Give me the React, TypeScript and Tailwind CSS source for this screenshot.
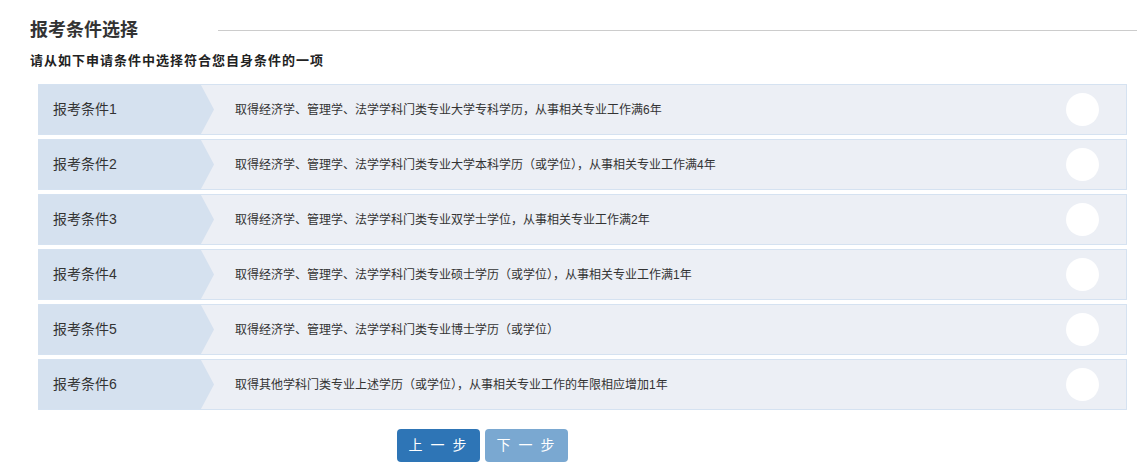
import React, { useState } from 'react';

const conditions = [
  '取得经济学、管理学、法学学科门类专业大学专科学历，从事相关专业工作满6年',
  '取得经济学、管理学、法学学科门类专业大学本科学历（或学位），从事相关专业工作满4年',
  '取得经济学、管理学、法学学科门类专业双学士学位，从事相关专业工作满2年',
  '取得经济学、管理学、法学学科门类专业硕士学历（或学位），从事相关专业工作满1年',
  '取得经济学、管理学、法学学科门类专业博士学历（或学位）',
  '取得其他学科门类专业上述学历（或学位），从事相关专业工作的年限相应增加1年',
];

const font = { fontFamily: '"Liberation Sans", "Noto Sans CJK SC", sans-serif' };

export default function App() {
  const [selected, setSelected] = useState<number | null>(null);

  return (
    <div className="w-[1137px] h-[473px] bg-white text-[#333]" style={font}>
      {/* 标题 */}
      <div className="flex items-center pl-[30px] pt-[19px]">
        <h2 className="w-[188px] shrink-0 text-[18px] leading-[22px] font-bold text-[#333]">报考条件选择</h2>
        <div className="flex-1 h-px bg-[#cccccc]" />
      </div>
      <p className="pl-[30px] mt-[11px] text-[13px] leading-[18px] font-bold tracking-[1px] text-[#222]">
        请从如下申请条件中选择符合您自身条件的一项
      </p>

      {/* 条件列表 */}
      <div className="mt-[14px] ml-[38px] w-[1089px] flex flex-col gap-[4px]">
        {conditions.map((text, i) => (
          <div
            key={i}
            onClick={() => setSelected(i)}
            className="relative flex items-center h-[51px] bg-[#eceff5] border border-[#d5e2f1] cursor-pointer"
          >
            <div className="relative h-full w-[163px] shrink-0 bg-[#d5e1ef] flex items-center pl-[15px] -ml-px -my-px">
              <span className="text-[14px] text-[#333]">报考条件{i + 1}</span>
              <svg className="absolute left-full top-0 h-full w-[13px]" viewBox="0 0 13 51" preserveAspectRatio="none">
                <polygon points="0,0 13,25.5 0,51" fill="#d5e1ef" />
              </svg>
            </div>
            <div className="flex-1 pl-[34px] text-[12px] text-[#333]">{text}</div>
            <div className="w-[33px] h-[33px] rounded-full bg-white mr-[27px] flex items-center justify-center">
              {selected === i && <div className="w-[15px] h-[15px] rounded-full bg-[#2e75b6]" />}
            </div>
          </div>
        ))}
      </div>

      {/* 按钮 */}
      <div className="flex gap-[5px] ml-[397px] mt-[19px]">
        <button className="w-[83px] h-[33px] rounded-[4px] bg-[#2e75b6] text-white text-[14px] tracking-[2px]">
          上 一 步
        </button>
        <button className="w-[83px] h-[33px] rounded-[4px] bg-[#7aa8d1] text-white text-[14px] tracking-[2px]">
          下 一 步
        </button>
      </div>
    </div>
  );
}
